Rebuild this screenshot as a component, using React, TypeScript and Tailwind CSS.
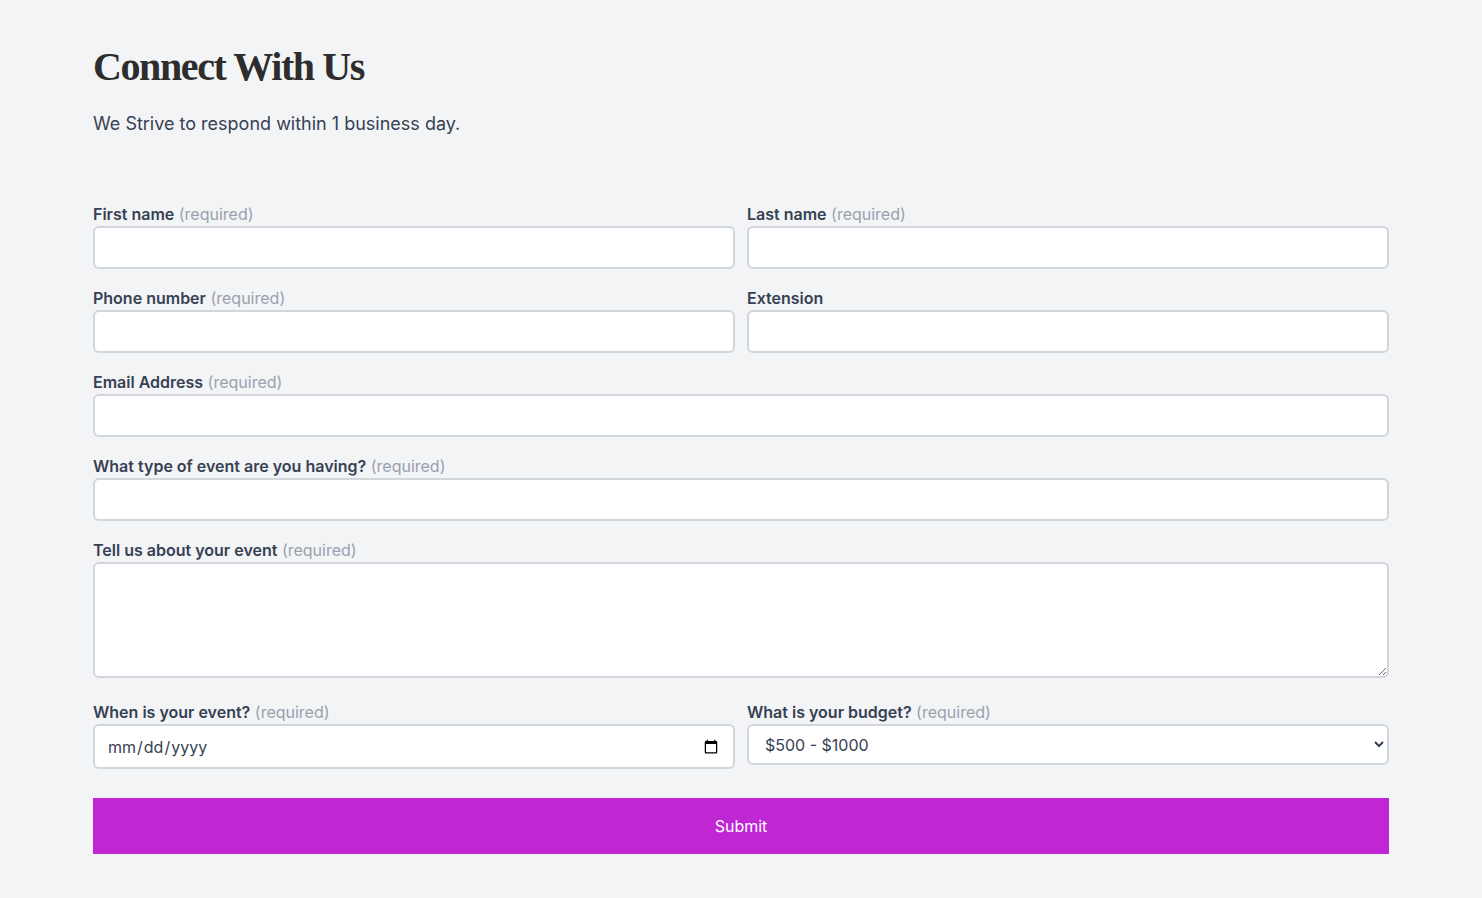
const Field = ({
	label,
	required = true,
	children,
}: {
	label: string;
	required?: boolean;
	children: React.ReactNode;
}) => (
	<div className="flex flex-col">
		<label className="h-6 text-base leading-6 font-semibold text-gray-700">
			{label}
			{required && <span className="font-normal text-gray-400"> (required)</span>}
		</label>
		{children}
	</div>
);

const inputCls =
	"h-[43px] w-full rounded-md border-2 border-gray-300 bg-white px-3 text-base text-gray-700 outline-none";

const App = () => {
	return (
		<div
			className="min-h-screen bg-gray-100 text-gray-700"
			style={{ fontFamily: "Inter, 'Noto Sans', sans-serif" }}
		>
			<div className="mx-auto w-[1296px] pt-[42px] pb-[44px]">
				{/* Header */}
				<h1
					className="text-[40px] leading-[50px] font-bold tracking-[-1.4px] text-[#2d2d2d]"
					style={{ fontFamily: "'Liberation Serif', 'DejaVu Serif', serif" }}
				>
					Connect With Us
				</h1>
				<p className="mt-[18px] text-lg leading-7 text-gray-700">
					We Strive to respond within 1 business day.
				</p>

				{/* Form */}
				<form className="mt-[64px] flex flex-col">
					<div className="grid grid-cols-2 gap-x-3">
						<Field label="First name">
							<input type="text" className={inputCls} />
						</Field>
						<Field label="Last name">
							<input type="text" className={inputCls} />
						</Field>
					</div>
					<div className="mt-[17px] grid grid-cols-2 gap-x-3">
						<Field label="Phone number">
							<input type="text" className={inputCls} />
						</Field>
						<Field label="Extension" required={false}>
							<input type="text" className={inputCls} />
						</Field>
					</div>
					<div className="mt-[17px]">
						<Field label="Email Address">
							<input type="email" className={inputCls} />
						</Field>
					</div>
					<div className="mt-[17px]">
						<Field label="What type of event are you having?">
							<input type="text" className={inputCls} />
						</Field>
					</div>
					<div className="mt-[17px]">
						<Field label="Tell us about your event">
							<textarea className="h-[116px] w-full rounded-md border-2 border-gray-300 bg-white px-3 py-2 text-base outline-none" />
						</Field>
					</div>
					<div className="mt-[22px] grid grid-cols-2 items-start gap-x-3">
						<Field label="When is your event?">
							<input
								type="date"
								className="h-[45px] w-full rounded-md border-2 border-gray-300 bg-white px-3 text-base text-gray-700 outline-none"
							/>
						</Field>
						<Field label="What is your budget?">
							<select
								defaultValue="500"
								className="h-[41px] w-full rounded-md border-2 border-gray-300 bg-white px-3 text-base text-gray-700 outline-none"
							>
								<option value="500">$500 - $1000</option>
								<option value="1000">$1000 - $5000</option>
								<option value="5000">$5000+</option>
							</select>
						</Field>
					</div>

					{/* Submit */}
					<button
						type="submit"
						className="mt-[29px] h-14 w-full bg-[#c026d3] text-base text-white"
					>
						Submit
					</button>
				</form>
			</div>
		</div>
	);
};

export default App;
